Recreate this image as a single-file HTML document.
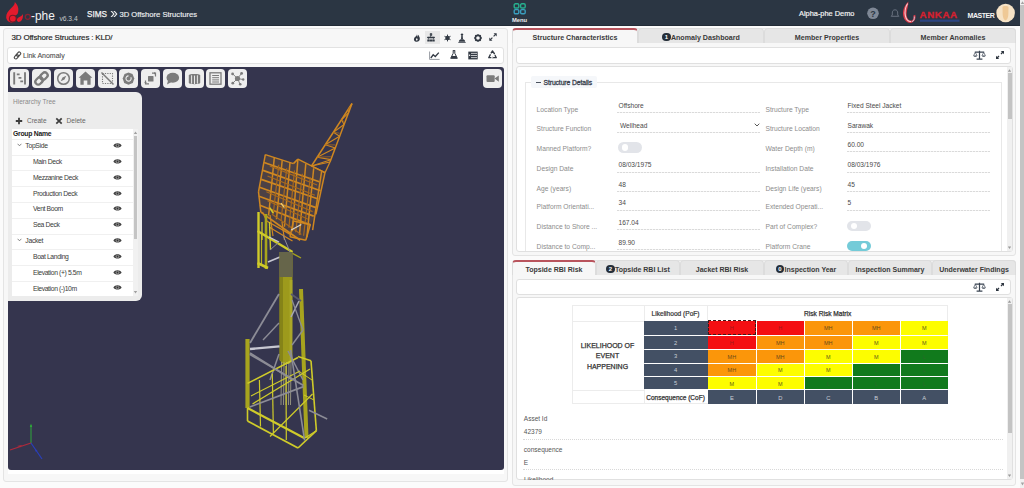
<!DOCTYPE html>
<html><head><meta charset="utf-8">
<style>
*{box-sizing:border-box;margin:0;padding:0}
html,body{width:1024px;height:488px;overflow:hidden;background:#fbfbfb;font-family:"Liberation Sans",sans-serif;color:#333}
.abs{position:absolute}
.t{position:absolute;white-space:nowrap;line-height:1}
.tb{position:absolute;top:69px;width:19px;height:19px;background:#eeeeee;border-radius:4px}
.tab{position:absolute;height:15px;background:#e6e6e6;border:1px solid #dcdcdc;border-bottom:none;border-radius:4px 4px 0 0}
.tab.act{background:#f7f7f7;border-top:2px solid #b9545d}
.tbox{position:absolute;background:#fff;border:1px solid #e0e0e0;border-radius:3px}
</style></head><body>
<div class="abs" style="left:0;top:0;width:1020px;height:25.6px;background:#2b3643;border-bottom:1px solid #232c37"></div>
<svg class="abs" style="left:0;top:0" width="60" height="26" viewBox="0 0 60 26">
 <path d="M14.8 2 C18 5 19.2 9 17.8 13.2 C17.2 14.6 16 15 15.2 15.6 C13.5 14.6 11 15.2 10.2 17.3 C9.7 19.3 10.8 21.4 12.6 22.5 C9.2 22.6 6.5 20.6 6.2 17.5 C6 14 8.3 11 10.8 8.6 C12.8 6.6 15 4.8 14.8 2 Z" fill="#e41b2d"/>
 <circle cx="12.8" cy="18.6" r="3.4" fill="#e41b2d" stroke="#7e1824" stroke-width="1.1"/>
 <path d="M23 13.9 C22.3 16 19.8 16.5 17.8 18 C16.3 19.4 16.6 21.6 18.6 21.9 C21.2 21.9 23.3 19 23 13.9 Z" fill="#e41b2d"/>
 <circle cx="27.8" cy="16.8" r="2.5" fill="none" stroke="#8a2232" stroke-width="1.3"/>
</svg>
<div class="t" style="left:31px;top:10.5px;font-size:11.9px;color:#f2f2f2">-phe</div>
<div class="t" style="left:59.4px;top:16px;font-size:6.7px;color:#c4c8cc">v6.3.4</div>

<div class="t" style="left:87px;top:11px;font-size:8.2px;color:#f2f2f2;-webkit-text-stroke:0.25px #f2f2f2">SIMS</div>

<svg class="abs" style="left:110px;top:10px" width="8" height="8" viewBox="0 0 8 8"><path d="M0.5 1 L3.2 4 L0.5 7 L2 7 L4.7 4 L2 1 Z M3.3 1 L6 4 L3.3 7 L4.8 7 L7.5 4 L4.8 1 Z" fill="#eee"/></svg>
<div class="t" style="left:119.5px;top:11px;font-size:7.6px;color:#eceef0;-webkit-text-stroke:0.15px #eceef0">3D Offshore Structures</div>

<svg class="abs" style="left:513px;top:3px" width="14" height="12" viewBox="0 0 14 12">
 <rect x="1.2" y="0.8" width="4.6" height="4.2" rx="1.2" fill="none" stroke="#27b08e" stroke-width="1.4"/>
 <rect x="7.6" y="0.8" width="4.6" height="4.2" rx="1.2" fill="none" stroke="#27b08e" stroke-width="1.4"/>
 <rect x="1.2" y="6.6" width="4.6" height="4.2" rx="1.2" fill="none" stroke="#3a9ebe" stroke-width="1.4"/>
 <rect x="7.6" y="6.6" width="4.6" height="4.2" rx="1.2" fill="none" stroke="#3a9ebe" stroke-width="1.4"/>
</svg>
<div class="t" style="left:512px;top:18px;font-size:5.8px;color:#f0f0f0;font-weight:bold">Menu</div>
<div class="t" style="left:799px;top:10px;font-size:7.4px;color:#f0f0f0;-webkit-text-stroke:0.2px #f0f0f0">Alpha-phe Demo</div>
<svg class="abs" style="left:866px;top:7px" width="14" height="13" viewBox="0 0 14 13">
 <circle cx="7" cy="6.3" r="5.8" fill="#7f8896"/>
 <text x="7" y="9.6" font-family="Liberation Sans" font-weight="bold" font-size="9" fill="#2b3643" text-anchor="middle">?</text>
</svg>
<svg class="abs" style="left:890px;top:9px" width="10" height="9" viewBox="0 0 10 9"><path d="M5 0.8 C3 0.8 2.3 2.3 2.3 4 L2.3 6 L1.2 7.3 L8.8 7.3 L7.7 6 L7.7 4 C7.7 2.3 7 0.8 5 0.8 Z" fill="none" stroke="#6e7784" stroke-width="0.9"/></svg>
<svg class="abs" style="left:900px;top:0" width="62" height="26" viewBox="0 0 62 26">
 <path d="M8.3 1.5 C4 6 2.3 11 3.3 16 C4.3 21 8 23.7 11.6 22.7 C14.8 21.7 16.3 18.5 15.2 14.8 L13.4 15.4 C14 18 13 20.6 11 20.6 C8 20.6 6.3 17 6.6 13 C6.9 9 8.8 5 8.3 1.5 Z" fill="#de3a48"/>
 <path d="M7.6 3.5 C5.2 7.5 4.6 12 5.4 15.8 C6.2 19.5 8.6 21.6 11.2 21.5" fill="none" stroke="#f4d0d6" stroke-width="1.1"/>
 <path d="M12 21.6 C13.8 21 14.6 19 14.3 16.5" fill="none" stroke="#c9c4d8" stroke-width="1"/>
 <text x="19.6" y="18.4" font-family="Liberation Sans" font-weight="bold" font-size="9.8" fill="#d42030" letter-spacing="0.55" stroke="#d42030" stroke-width="0.35">ANKAA</text>
 <rect x="20" y="19.6" width="39.5" height="2.2" fill="#2c4a94" opacity="0.75"/>
</svg>
<div class="t" style="left:967.5px;top:11.5px;font-size:7px;color:#f4f4f4;font-weight:bold;letter-spacing:-0.45px">MASTER</div>
<svg class="abs" style="left:996px;top:3px" width="20" height="20" viewBox="0 0 20 20">
 <circle cx="9.6" cy="10" r="9.3" fill="#f6e3c6"/>
 <path d="M6.5 4 C7 2.8 12 2.8 12.5 4 L12.3 12 C12 15 11 17 9.5 17.5 C8 17 7 15 6.7 12 Z" fill="#eec28a" opacity="0.8"/>
</svg>
<div class="abs" style="left:1019.5px;top:0;width:4.5px;height:488px;background:#f1f1f1"></div><div class="abs" style="left:1020px;top:5px;width:4px;height:474px;background:#c4c4c4"></div><svg class="abs" style="left:1019.5px;top:0" width="5" height="488" viewBox="0 0 5 488"><path d="M0.8 4 L2.5 1.2 L4.2 4 Z M0.8 482.5 L2.5 485.5 L4.2 482.5 Z" fill="#a3a3a3"/></svg>
<div class="abs" style="left:3px;top:28px;width:505px;height:454px;background:#f7f7f7;border:1px solid #e4e4e4;border-radius:3px"></div>
<div class="abs" style="left:8px;top:469px;width:496px;height:4.5px;background:#fff"></div>
<div class="t" style="left:11.5px;top:34px;font-size:8px;color:#222;letter-spacing:-0.18px;-webkit-text-stroke:0.15px #222">3D Offshore Structures : KLD/</div>

<div class="abs" style="left:7px;top:47px;width:497px;height:17px;background:#fff;border:1px solid #e2e2e2;border-radius:3px"></div>
<div class="t" style="left:23px;top:52px;font-size:7px;color:#505050;-webkit-text-stroke:0.1px #505050">Link Anomaly</div>

<div class="abs" style="left:8px;top:67px;width:496px;height:403px;background:#35354e;border-radius:3px"></div>
<svg id="model" class="abs" style="left:8px;top:67px" width="496" height="403" viewBox="8 67 496 403">
<line x1="352" y1="103.5" x2="311.5" y2="166" stroke="#cf8720" stroke-width="1.5" opacity="1"/>
<line x1="352" y1="103.5" x2="330" y2="162" stroke="#cf8720" stroke-width="1.5" opacity="1"/>
<line x1="349.57" y1="107.25" x2="348.48" y2="112.86" stroke="#cf8720" stroke-width="1.1" opacity="1"/>
<line x1="348.48" y1="112.86" x2="341.47" y2="119.75" stroke="#cf8720" stroke-width="1.1" opacity="1"/>
<line x1="349.57" y1="107.25" x2="348.48" y2="109.86" stroke="#a9691c" stroke-width="0.8" opacity="1"/>
<line x1="341.47" y1="119.75" x2="344.08" y2="124.56" stroke="#cf8720" stroke-width="1.1" opacity="1"/>
<line x1="344.08" y1="124.56" x2="333.37" y2="132.25" stroke="#cf8720" stroke-width="1.1" opacity="1"/>
<line x1="341.47" y1="119.75" x2="344.08" y2="121.56" stroke="#a9691c" stroke-width="0.8" opacity="1"/>
<line x1="333.37" y1="132.25" x2="339.68" y2="136.26" stroke="#cf8720" stroke-width="1.1" opacity="1"/>
<line x1="339.68" y1="136.26" x2="325.27" y2="144.75" stroke="#cf8720" stroke-width="1.1" opacity="1"/>
<line x1="333.37" y1="132.25" x2="339.68" y2="133.26" stroke="#a9691c" stroke-width="0.8" opacity="1"/>
<line x1="325.27" y1="144.75" x2="335.28" y2="147.96" stroke="#cf8720" stroke-width="1.1" opacity="1"/>
<line x1="335.28" y1="147.96" x2="317.17" y2="157.25" stroke="#cf8720" stroke-width="1.1" opacity="1"/>
<line x1="325.27" y1="144.75" x2="335.28" y2="144.96" stroke="#a9691c" stroke-width="0.8" opacity="1"/>
<line x1="317.17" y1="157.25" x2="330.88" y2="159.66" stroke="#cf8720" stroke-width="1.1" opacity="1"/>
<line x1="330.88" y1="159.66" x2="311.5" y2="166.0" stroke="#cf8720" stroke-width="1.1" opacity="1"/>
<line x1="317.17" y1="157.25" x2="330.88" y2="156.66" stroke="#a9691c" stroke-width="0.8" opacity="1"/>
<line x1="311.5" y1="166" x2="330" y2="162" stroke="#cf8720" stroke-width="1.2" opacity="1"/>
<line x1="330" y1="162" x2="325" y2="172.7" stroke="#cf8720" stroke-width="1.3" opacity="1"/>
<line x1="311.5" y1="166" x2="325" y2="172.7" stroke="#cf8720" stroke-width="1.3" opacity="1"/>
<polygon points="265.27027027027026,154.63963963963963 293.4234234234234,163.64864864864865 297.92792792792795,159.14414414414415 324.9549549549549,172.65765765765764 315.94594594594594,214.32432432432432 310.3153153153153,224.45945945945945 305.81081081081084,240.22522522522522 290.0450450450451,236.84684684684686 260.76576576576576,212.07207207207205 258.5135135135135,191.8018018018018" fill="#b87a20" opacity="0.18"/>
<line x1="265.3" y1="154.6" x2="293.4" y2="163.6" stroke="#cf8720" stroke-width="1.5" opacity="1"/>
<line x1="265.3" y1="154.6" x2="258.5" y2="191.8" stroke="#cf8720" stroke-width="1.5" opacity="1"/>
<line x1="258.5" y1="191.8" x2="260.8" y2="212.1" stroke="#cf8720" stroke-width="1.5" opacity="1"/>
<line x1="297.9" y1="159.1" x2="325.0" y2="172.7" stroke="#cf8720" stroke-width="1.5" opacity="1"/>
<line x1="293.4" y1="163.6" x2="297.9" y2="159.1" stroke="#cf8720" stroke-width="1.5" opacity="1"/>
<line x1="325.0" y1="172.7" x2="315.9" y2="214.3" stroke="#cf8720" stroke-width="1.5" opacity="1"/>
<line x1="264.1" y1="162.5" x2="319.3" y2="181.7" stroke="#cf8720" stroke-width="1.7" opacity="1"/>
<line x1="263.0" y1="170.4" x2="320.5" y2="190.7" stroke="#cf8720" stroke-width="1.7" opacity="1"/>
<line x1="261.2" y1="179.4" x2="318.2" y2="199.0" stroke="#cf8720" stroke-width="1.7" opacity="1"/>
<line x1="259.6" y1="187.3" x2="315.9" y2="207.6" stroke="#cf8720" stroke-width="1.7" opacity="1"/>
<line x1="259.0" y1="196.3" x2="313.7" y2="216.1" stroke="#cf8720" stroke-width="1.7" opacity="1"/>
<line x1="259.9" y1="205.3" x2="310.8" y2="225.1" stroke="#cf8720" stroke-width="1.7" opacity="1"/>
<line x1="260.8" y1="212.1" x2="300.2" y2="240.2" stroke="#cf8720" stroke-width="1.7" opacity="1"/>
<line x1="274.3" y1="157.6" x2="268.6" y2="215.5" stroke="#cf8720" stroke-width="1.5" opacity="1"/>
<line x1="282.2" y1="160.3" x2="276.5" y2="219.3" stroke="#cf8720" stroke-width="1.5" opacity="1"/>
<line x1="290.0" y1="162.5" x2="284.4" y2="226.7" stroke="#cf8720" stroke-width="1.5" opacity="1"/>
<line x1="297.9" y1="159.1" x2="292.3" y2="231.2" stroke="#cf8720" stroke-width="1.5" opacity="1"/>
<line x1="305.8" y1="163.6" x2="299.5" y2="234.6" stroke="#cf8720" stroke-width="1.5" opacity="1"/>
<line x1="313.7" y1="168.2" x2="306.9" y2="237.3" stroke="#cf8720" stroke-width="1.5" opacity="1"/>
<line x1="321.6" y1="171.5" x2="312.6" y2="230.1" stroke="#cf8720" stroke-width="1.5" opacity="1"/>
<line x1="269.8" y1="165.9" x2="317.1" y2="185.0" stroke="#a9691c" stroke-width="1.2" opacity="1"/>
<line x1="267.5" y1="176.0" x2="314.8" y2="195.2" stroke="#a9691c" stroke-width="1.2" opacity="1"/>
<line x1="266.4" y1="191.8" x2="312.6" y2="211.6" stroke="#a9691c" stroke-width="1.2" opacity="1"/>
<line x1="267.5" y1="200.8" x2="308.1" y2="219.3" stroke="#a9691c" stroke-width="1.2" opacity="1"/>
<line x1="272.0" y1="214.3" x2="301.3" y2="234.6" stroke="#a9691c" stroke-width="1.2" opacity="1"/>
<line x1="278.8" y1="164.8" x2="273.2" y2="214.3" stroke="#a9691c" stroke-width="1.2" opacity="1"/>
<line x1="286.7" y1="168.2" x2="281.0" y2="221.1" stroke="#a9691c" stroke-width="1.2" opacity="1"/>
<line x1="294.5" y1="170.4" x2="288.9" y2="227.8" stroke="#a9691c" stroke-width="1.2" opacity="1"/>
<line x1="302.4" y1="173.8" x2="295.7" y2="232.3" stroke="#a9691c" stroke-width="1.2" opacity="1"/>
<line x1="310.3" y1="177.2" x2="303.6" y2="235.7" stroke="#a9691c" stroke-width="1.2" opacity="1"/>
<line x1="293.4" y1="221.1" x2="310.3" y2="224.5" stroke="#cf8720" stroke-width="1.5" opacity="1"/>
<line x1="310.3" y1="224.5" x2="305.8" y2="240.2" stroke="#cf8720" stroke-width="1.5" opacity="1"/>
<line x1="305.8" y1="240.2" x2="290.0" y2="236.8" stroke="#cf8720" stroke-width="1.5" opacity="1"/>
<line x1="290.0" y1="236.8" x2="293.4" y2="221.1" stroke="#cf8720" stroke-width="1.5" opacity="1"/>
<line x1="291.2" y1="230.1" x2="301.3" y2="224.5" stroke="#d8d6d0" stroke-width="1.2" opacity="1"/>
<line x1="269.8" y1="207.6" x2="273.2" y2="213.2" stroke="#cfcb2a" stroke-width="1.6" opacity="1"/>
<line x1="281.0" y1="203.1" x2="284.4" y2="207.6" stroke="#e8d080" stroke-width="1.2" opacity="1"/>
<line x1="266.7" y1="221" x2="291.3" y2="234.8" stroke="#cf8720" stroke-width="1.4" opacity="1"/>
<line x1="269" y1="227" x2="292.5" y2="241" stroke="#cf8720" stroke-width="1.3" opacity="1"/>
<line x1="270" y1="215" x2="273" y2="236" stroke="#cf8720" stroke-width="1.2" opacity="1"/>
<line x1="282" y1="222" x2="284.5" y2="240" stroke="#cf8720" stroke-width="1.2" opacity="1"/>
<line x1="262.5" y1="212" x2="266.7" y2="221" stroke="#cf8720" stroke-width="1.2" opacity="1"/>
<line x1="258.5" y1="212" x2="258.5" y2="268" stroke="#cfcb2a" stroke-width="2.4" opacity="1"/>
<line x1="266" y1="214" x2="266" y2="269" stroke="#a9a51c" stroke-width="2.6" opacity="1"/>
<line x1="269.5" y1="222" x2="270.5" y2="250" stroke="#cfcb2a" stroke-width="1.4" opacity="1"/>
<line x1="261.5" y1="232" x2="261.5" y2="264" stroke="#b8b420" stroke-width="1.2" opacity="1"/>
<line x1="257.5" y1="231" x2="292.5" y2="252" stroke="#cfcb2a" stroke-width="2.4" opacity="1"/>
<line x1="257.5" y1="263" x2="268" y2="268" stroke="#cfcb2a" stroke-width="2.6" opacity="1"/>
<line x1="262" y1="222" x2="262" y2="240" stroke="#cfcb2a" stroke-width="1.3" opacity="1"/>
<line x1="268" y1="262" x2="280" y2="257" stroke="#c8c8d2" stroke-width="1.7" opacity="1"/>
<line x1="269" y1="237" x2="279" y2="242" stroke="#c8c8d2" stroke-width="1.3" opacity="1"/>
<line x1="270" y1="250" x2="279" y2="242" stroke="#8c8c96" stroke-width="1.0" opacity="1"/>
<line x1="283" y1="235" x2="290" y2="252" stroke="#8c8c96" stroke-width="1.0" opacity="1"/>
<line x1="290" y1="252" x2="301" y2="258" stroke="#a9a51c" stroke-width="1.4" opacity="1"/>
<polygon points="279.5,252 292.5,252 292.3,360 289,364 283,364 279.5,360" fill="#9d9a1c" opacity="1"/>
<polygon points="279.5,252 292.5,252 292.5,277 279.5,277" fill="#66654a" opacity="1"/>
<polygon points="279.5,277 283,277 283,362 279.5,360" fill="#7f7d18" opacity="0.8"/>
<polygon points="289.5,280 292.5,280 292.3,360 289.5,363" fill="#b3b030" opacity="0.6"/>
<line x1="301" y1="289" x2="306.5" y2="438" stroke="#a7a41e" stroke-width="4.0" opacity="1"/>
<line x1="247.5" y1="339" x2="247.5" y2="408" stroke="#a7a41e" stroke-width="4.2" opacity="1"/>
<line x1="250" y1="343" x2="279" y2="294" stroke="#8c8c96" stroke-width="1.8" opacity="1"/>
<line x1="250" y1="349" x2="279.5" y2="346.4" stroke="#c8c8d2" stroke-width="2.3" opacity="1"/>
<line x1="250" y1="353" x2="293" y2="380" stroke="#8c8c96" stroke-width="1.8" opacity="1"/>
<line x1="288" y1="351" x2="303" y2="380" stroke="#8c8c96" stroke-width="1.5" opacity="1"/>
<line x1="291" y1="294" x2="301" y2="301" stroke="#5a5a6e" stroke-width="1.8" opacity="1"/>
<line x1="291" y1="317" x2="299" y2="301" stroke="#a8a8b4" stroke-width="1.5" opacity="1"/>
<line x1="292" y1="300" x2="303" y2="330" stroke="#8c8c96" stroke-width="1.3" opacity="1"/>
<line x1="303" y1="330" x2="292" y2="345" stroke="#8c8c96" stroke-width="1.4" opacity="1"/>
<line x1="279" y1="354" x2="270" y2="380" stroke="#8c8c96" stroke-width="1.5" opacity="1"/>
<line x1="263" y1="340" x2="279" y2="323" stroke="#8c8c96" stroke-width="1.4" opacity="1"/>
<line x1="281.5" y1="362" x2="281.0" y2="405" stroke="#a9a78a" stroke-width="0.9" opacity="0.9"/>
<line x1="284" y1="362" x2="283.5" y2="405" stroke="#a9a78a" stroke-width="0.9" opacity="0.9"/>
<line x1="286.5" y1="362" x2="286.0" y2="405" stroke="#a9a78a" stroke-width="0.9" opacity="0.9"/>
<line x1="289" y1="362" x2="288.5" y2="405" stroke="#a9a78a" stroke-width="0.9" opacity="0.9"/>
<line x1="291" y1="362" x2="290.5" y2="405" stroke="#a9a78a" stroke-width="0.9" opacity="0.9"/>
<line x1="247.5" y1="408" x2="304.6" y2="438.3" stroke="#cfcb2a" stroke-width="2.1" opacity="1"/>
<line x1="247.5" y1="421" x2="298" y2="448" stroke="#cfcb2a" stroke-width="1.9" opacity="1"/>
<line x1="247.5" y1="408" x2="247.5" y2="421" stroke="#cfcb2a" stroke-width="1.6" opacity="1"/>
<line x1="298" y1="448" x2="316.4" y2="430.7" stroke="#cfcb2a" stroke-width="1.7" opacity="1"/>
<line x1="304.6" y1="438.3" x2="316.4" y2="430.7" stroke="#cfcb2a" stroke-width="1.2" opacity="1"/>
<line x1="311" y1="360.8" x2="316.4" y2="430.7" stroke="#cfcb2a" stroke-width="1.6" opacity="1"/>
<line x1="298" y1="356.5" x2="311" y2="360.8" stroke="#cfcb2a" stroke-width="1.6" opacity="1"/>
<line x1="247.5" y1="383.4" x2="298" y2="357.5" stroke="#cfcb2a" stroke-width="1.6" opacity="1"/>
<line x1="259.4" y1="380" x2="260.5" y2="426.4" stroke="#cfcb2a" stroke-width="1.2" opacity="1"/>
<line x1="272.3" y1="373.7" x2="273.4" y2="433" stroke="#cfcb2a" stroke-width="1.2" opacity="1"/>
<line x1="286" y1="366" x2="286.3" y2="440" stroke="#cfcb2a" stroke-width="1.2" opacity="1"/>
<line x1="251" y1="396" x2="300" y2="371" stroke="#cfcb2a" stroke-width="1.1" opacity="1"/>
<line x1="252.5" y1="404" x2="310" y2="369" stroke="#cfcb2a" stroke-width="1.3" opacity="1"/>
<line x1="270" y1="436.5" x2="312.5" y2="394" stroke="#cfcb2a" stroke-width="1.3" opacity="1"/>
<line x1="304" y1="395" x2="314" y2="400" stroke="#cfcb2a" stroke-width="1.0" opacity="1"/>
<line x1="300" y1="372" x2="312" y2="380" stroke="#cfcb2a" stroke-width="1.0" opacity="1"/>
<line x1="249.7" y1="354.3" x2="303.5" y2="385.5" stroke="#8c8c96" stroke-width="1.7" opacity="1"/>
<line x1="249.7" y1="407" x2="303.5" y2="386.6" stroke="#8c8c96" stroke-width="1.7" opacity="1"/>
<line x1="290.6" y1="350" x2="304.6" y2="440.4" stroke="#8c8c96" stroke-width="1.6" opacity="1"/>
<line x1="309" y1="410.3" x2="327.2" y2="419" stroke="#8c8c96" stroke-width="1.5" opacity="1"/>
</svg>
<svg class="tb" style="left:10px" width="19" height="19" viewBox="0 0 19 19"><path d="M4.2 3.2 V15.5 M15 3.2 V15.5" stroke="#7b7b7b" stroke-width="1.9"/><path d="M6.8 5.4 H9.6 M8.5 8.9 H11.4 M10.3 12.4 H13.1" stroke="#7b7b7b" stroke-width="1.6"/></svg>
<svg class="tb" style="left:32px" width="19" height="19" viewBox="0 0 19 19"><g transform="rotate(-45 9.5 9.5)"><rect x="2" y="6.6" width="8.2" height="5.8" rx="2.9" fill="none" stroke="#7b7b7b" stroke-width="2.3"/><rect x="8.8" y="6.6" width="8.2" height="5.8" rx="2.9" fill="none" stroke="#7b7b7b" stroke-width="2.3"/></g></svg>
<svg class="tb" style="left:54px" width="19" height="19" viewBox="0 0 19 19"><circle cx="9.5" cy="9.5" r="5.8" fill="none" stroke="#7b7b7b" stroke-width="1.5"/><path d="M12.3 6.7 L10.5 10.5 L6.7 12.3 L8.5 8.5 Z" fill="#7b7b7b"/></svg>
<svg class="tb" style="left:75.5px" width="19" height="19" viewBox="0 0 19 19"><path d="M9.5 2.4 L16.4 8.8 L14.6 8.8 L14.6 15.8 L11.3 15.8 L11.3 11.4 L7.7 11.4 L7.7 15.8 L4.4 15.8 L4.4 8.8 L2.6 8.8 Z" fill="#7b7b7b"/></svg>
<svg class="tb" style="left:97.5px" width="19" height="19" viewBox="0 0 19 19"><rect x="4.5" y="4.5" width="10" height="10" fill="none" stroke="#7b7b7b" stroke-width="1.1" stroke-dasharray="1.2 1.2"/><path d="M3.5 3.5 L15.5 15.5" stroke="#7b7b7b" stroke-width="1.5"/></svg>
<svg class="tb" style="left:119.3px" width="19" height="19" viewBox="0 0 19 19"><path d="M9.5 3.5 L13.5 5 L15.3 9.5 L13.8 14 L9.5 15.8 L5.2 14 L3.7 9.5 L5.5 5 Z" fill="#7b7b7b"/><path d="M11.8 8.2 A2.6 2.6 0 1 1 9.5 6.9" fill="none" stroke="#eee" stroke-width="1.1"/></svg>
<svg class="tb" style="left:141.3px" width="19" height="19" viewBox="0 0 19 19"><rect x="7" y="7" width="5.5" height="5.5" rx="0.6" fill="#7b7b7b"/><path d="M11 4.2 H14.5 V7.5 M4.5 11.5 V14.8 H8" fill="none" stroke="#7b7b7b" stroke-width="1.2"/><path d="M13 3 L15 4.2 L13 5.4 Z M3.3 13 L4.5 15 L5.7 13 Z" fill="#7b7b7b"/></svg>
<svg class="tb" style="left:162.5px" width="19" height="19" viewBox="0 0 19 19"><ellipse cx="9.8" cy="8.7" rx="6.3" ry="5" fill="#7b7b7b"/><path d="M5 11.5 L4 15.5 L8.5 13 Z" fill="#7b7b7b"/></svg>
<svg class="tb" style="left:184.5px" width="19" height="19" viewBox="0 0 19 19"><path d="M3.8 6 C3.8 4.5 15.2 4.5 15.2 6 V14 C15.2 15.5 3.8 15.5 3.8 14 Z" fill="#7b7b7b"/><path d="M6.6 6.3 V14.6 M9.5 6.6 V15 M12.4 6.3 V14.6" stroke="#e9e9e9" stroke-width="1"/></svg>
<svg class="tb" style="left:206.3px" width="19" height="19" viewBox="0 0 19 19"><rect x="4" y="3.8" width="11" height="11.4" fill="none" stroke="#7b7b7b" stroke-width="1.3"/><path d="M6.2 6.5 H13 M6.2 8.7 H13 M6.2 10.9 H13 M6.2 13 H13" stroke="#7b7b7b" stroke-width="1"/></svg>
<svg class="tb" style="left:228px" width="19" height="19" viewBox="0 0 19 19"><path d="M9.5 9.5 L4.8 5 M9.5 9.5 L13.5 4.5 M9.5 9.5 L15 10.5 M9.5 9.5 L5 14 M9.5 9.5 L12 15" stroke="#7b7b7b" stroke-width="0.9"/><circle cx="9.5" cy="9.5" r="2.6" fill="#7b7b7b"/><circle cx="4.6" cy="4.9" r="1.4" fill="#7b7b7b"/><circle cx="13.6" cy="4.4" r="1.4" fill="#7b7b7b"/><circle cx="15.2" cy="10.5" r="1.2" fill="#7b7b7b"/><circle cx="4.8" cy="14.2" r="1.4" fill="#7b7b7b"/><circle cx="12.2" cy="15.3" r="1.3" fill="#7b7b7b"/></svg>
<svg class="tb" style="left:483px" width="19" height="19" viewBox="0 0 19 19"><rect x="3.5" y="6.3" width="8.2" height="6.6" rx="1" fill="#7b7b7b"/><path d="M11.5 9.6 L15.8 6.5 V12.7 Z" fill="#7b7b7b"/></svg>
<div class="abs" style="left:425.3px;top:30.6px;width:14.7px;height:13.8px;background:#e8e8e8"></div>
<svg class="abs" style="left:412.5px;top:33px" width="8" height="9" viewBox="0 0 8 9"><path d="M3.5 0.5 C5 2.5 2 3.5 1.2 5.2 C0.3 7.2 1.8 8.8 3.6 8.8 C5.8 8.8 7.2 7.3 6.8 5 C6.5 3.6 5.5 2.8 5.6 1.8 C4.8 2.5 4.8 3.8 5 4.5 C4.6 3.5 4.3 1.8 3.5 0.5 Z" fill="#333a44"/><path d="M3.8 5 C4.8 6 5 7.2 3.8 7.6 C2.8 7.6 2.6 6.5 3.8 5 Z" fill="#f7f7f7"/></svg>
<svg class="abs" style="left:427.3px;top:33px" width="8" height="9" viewBox="0 0 8 9"><path d="M3.2 0.5 H4.8 V2.5 H3.2 Z M0.5 4 H7.5 V5 H0.5 Z M3.5 2.5 V4 M1.5 5 V6.5 M6.5 5 V6.5" fill="#333a44" stroke="#333a44" stroke-width="0.6"/><path d="M0.3 6.5 H2.7 V8.5 H0.3 Z M2.9 6.5 H5.1 V8.5 H2.9 Z M5.3 6.5 H7.7 V8.5 H5.3 Z" fill="#333a44"/></svg>
<svg class="abs" style="left:443.5px;top:33.5px" width="7" height="8" viewBox="0 0 7 8"><circle cx="3.5" cy="4" r="2.2" fill="#333a44"/><path d="M3.5 0.6 V7.4 M0.5 2.3 L6.5 5.7 M6.5 2.3 L0.5 5.7" stroke="#333a44" stroke-width="1"/></svg>
<svg class="abs" style="left:458.3px;top:32.5px" width="8" height="10" viewBox="0 0 8 10"><circle cx="4" cy="1.6" r="1.2" fill="#333a44"/><path d="M3.3 2.5 H4.7 L5 6.3 H3 Z" fill="#333a44"/><path d="M0.8 8.8 C0.8 6.8 2.5 6.3 4 6.3 C5.5 6.3 7.2 6.8 7.2 8.8 Z M0.3 9 H7.7 V9.8 H0.3 Z" fill="#333a44"/></svg>
<svg class="abs" style="left:473.5px;top:33.5px" width="8" height="8" viewBox="0 0 8 8"><circle cx="4" cy="4" r="2.6" fill="none" stroke="#333a44" stroke-width="1.6"/><path d="M4 0.2 V1.5 M4 6.5 V7.8 M0.2 4 H1.5 M6.5 4 H7.8 M1.3 1.3 L2.2 2.2 M5.8 5.8 L6.7 6.7 M6.7 1.3 L5.8 2.2 M1.3 6.7 L2.2 5.8" stroke="#333a44" stroke-width="1.3"/></svg>
<svg class="abs" style="left:488.8px;top:33.3px" width="8" height="8" viewBox="0 0 8 8"><path d="M4.6 0.3 H7.7 V3.4 Z M0.3 4.6 V7.7 H3.4 Z" fill="#333a44"/><path d="M6.8 1.2 L4.6 3.4 M1.2 6.8 L3.4 4.6" stroke="#333a44" stroke-width="1.2"/></svg>
<svg class="abs" style="left:429.3px;top:50.5px" width="11" height="9" viewBox="0 0 11 9"><path d="M0.6 0.5 V8.4 H10.6" fill="none" stroke="#8a8f96" stroke-width="0.9"/><path d="M1.8 7 L4.2 3.8 L6.3 5.5 L9.8 1.6" fill="none" stroke="#333a44" stroke-width="1.3"/></svg>
<svg class="abs" style="left:450.3px;top:50.3px" width="8" height="9" viewBox="0 0 8 9"><path d="M2.8 0.6 H5.2 M3.2 0.8 V3.3 L0.7 8.3 H7.3 L4.8 3.3 V0.8" fill="none" stroke="#333a44" stroke-width="1"/><path d="M1.8 6 H6.2 L7.3 8.3 H0.7 Z" fill="#333a44"/></svg>
<svg class="abs" style="left:467.8px;top:50.5px" width="10" height="9" viewBox="0 0 10 9"><rect x="0.3" y="0.6" width="9.4" height="7.8" fill="#333a44"/><path d="M3 2.4 H9 M3 4.5 H9 M3 6.6 H9" stroke="#fff" stroke-width="0.7"/><rect x="0.9" y="3.6" width="1.3" height="1.3" fill="#fff"/></svg>
<svg class="abs" style="left:487.5px;top:50.2px" width="9" height="9" viewBox="0 0 9 9"><path d="M2.9 3.4 L4.5 0.9 L6.1 3.4 M6.9 5.1 L8.3 7.7 H5.6 M3.4 7.7 H0.7 L2.1 5.1" fill="none" stroke="#333a44" stroke-width="1.3" stroke-linejoin="round"/><path d="M5.2 3.9 L6.8 2.5 L7.2 4.6 Z M4.6 6.6 L6.2 7.7 L4.6 8.8 Z M1.3 4.6 L2.9 4.1 L2.5 6.1 Z" fill="#333a44"/></svg>
<svg class="abs" style="left:12.5px;top:51px" width="9" height="9" viewBox="0 0 9 9"><g transform="rotate(-50 4.5 4.5)"><rect x="0.4" y="3" width="4.8" height="3" rx="1.5" fill="none" stroke="#4a4a4a" stroke-width="1.1"/><rect x="3.8" y="3" width="4.8" height="3" rx="1.5" fill="none" stroke="#4a4a4a" stroke-width="1.1"/></g></svg>
<svg class="abs" style="left:8px;top:400px" width="50" height="70" viewBox="0 0 50 70">
<line x1="23" y1="43" x2="23" y2="25" stroke="#2fa83a" stroke-width="1"/><path d="M21.8 27 L23 23.5 L24.2 27 Z" fill="#2fa83a"/>
<line x1="23" y1="43" x2="2" y2="50" stroke="#b02a3c" stroke-width="1.3"/><path d="M9 46 L14 45 L12.5 47.2 Z" fill="#b02a3c"/>
<line x1="23" y1="43" x2="34" y2="59" stroke="#2a3fb8" stroke-width="1.2"/><path d="M27 49 L29.5 50.5 L27.8 52 Z" fill="#2a3fb8"/>
</svg>
<div class="abs" style="left:8px;top:92px;width:134px;height:209px;background:#ececec;border-radius:0 6px 6px 0"></div>
<div class="t" style="left:13px;top:99px;font-size:6.5px;color:#8a8a8a">Hierarchy Tree</div>

<svg class="abs" style="left:15px;top:117px" width="8" height="8" viewBox="0 0 8 8"><path d="M4 0.8 V7.2 M0.8 4 H7.2" stroke="#3d3d3d" stroke-width="1.8"/></svg>
<div class="t" style="left:27px;top:118px;font-size:6.5px;color:#666">Create</div>

<svg class="abs" style="left:55px;top:117px" width="8" height="8" viewBox="0 0 8 8"><path d="M1.3 1.3 L6.7 6.7 M6.7 1.3 L1.3 6.7" stroke="#3d3d3d" stroke-width="1.7"/></svg>
<div class="t" style="left:66.5px;top:118px;font-size:6.6px;color:#666">Delete</div>

<div class="abs" style="left:12px;top:129px;width:126px;height:167px;background:#fff"></div>
<div class="abs" style="left:133px;top:129px;width:4.5px;height:167px;background:#f1f1f1"></div>
<div class="abs" style="left:133.5px;top:136px;width:3.5px;height:103px;background:#c4c4c4"></div>
<svg class="abs" style="left:133px;top:129px" width="5" height="167" viewBox="0 0 5 167"><path d="M0.8 5 L2.5 2.5 L4.2 5 Z M0.8 162 L2.5 164.5 L4.2 162 Z" fill="#a0a0a0"/></svg>
<div class="t" style="left:13px;top:131px;font-size:6.8px;color:#222;font-weight:bold;letter-spacing:-0.25px">Group Name</div>

<div class="abs" style="left:12px;top:138.8px;width:121px;height:1px;background:#f0f0f0"></div>
<svg class="abs" style="left:16.5px;top:143.3px" width="5" height="4" viewBox="0 0 5 4"><path d="M0.6 0.8 L2.5 2.8 L4.4 0.8" fill="none" stroke="#666" stroke-width="0.8"/></svg>
<div class="t" style="left:25.3px;top:143px;font-size:6.8px;color:#3a3a3a;letter-spacing:-0.3px">TopSide</div>

<svg class="abs" style="left:112.5px;top:142.1px" width="9" height="7" viewBox="0 0 9 7"><path d="M0.4 3.4 C1.8 0.6 7.2 0.6 8.6 3.4 C7.2 6.2 1.8 6.2 0.4 3.4 Z" fill="#404040"/><ellipse cx="4.5" cy="3.5" rx="1.9" ry="1.6" fill="#9a9a9a"/><circle cx="4.5" cy="3.5" r="0.9" fill="#333"/></svg>
<div class="abs" style="left:12px;top:154.6px;width:121px;height:1px;background:#f0f0f0"></div>
<div class="t" style="left:33px;top:159px;font-size:6.8px;color:#3a3a3a;letter-spacing:-0.38px">Main Deck</div>

<svg class="abs" style="left:112.5px;top:157.9px" width="9" height="7" viewBox="0 0 9 7"><path d="M0.4 3.4 C1.8 0.6 7.2 0.6 8.6 3.4 C7.2 6.2 1.8 6.2 0.4 3.4 Z" fill="#404040"/><ellipse cx="4.5" cy="3.5" rx="1.9" ry="1.6" fill="#9a9a9a"/><circle cx="4.5" cy="3.5" r="0.9" fill="#333"/></svg>
<div class="abs" style="left:12px;top:170.4px;width:121px;height:1px;background:#f0f0f0"></div>
<div class="t" style="left:33px;top:175px;font-size:6.8px;color:#3a3a3a;letter-spacing:-0.38px">Mezzanine Deck</div>

<svg class="abs" style="left:112.5px;top:173.7px" width="9" height="7" viewBox="0 0 9 7"><path d="M0.4 3.4 C1.8 0.6 7.2 0.6 8.6 3.4 C7.2 6.2 1.8 6.2 0.4 3.4 Z" fill="#404040"/><ellipse cx="4.5" cy="3.5" rx="1.9" ry="1.6" fill="#9a9a9a"/><circle cx="4.5" cy="3.5" r="0.9" fill="#333"/></svg>
<div class="abs" style="left:12px;top:186.2px;width:121px;height:1px;background:#f0f0f0"></div>
<div class="t" style="left:33px;top:191px;font-size:6.8px;color:#3a3a3a;letter-spacing:-0.38px">Production Deck</div>

<svg class="abs" style="left:112.5px;top:189.5px" width="9" height="7" viewBox="0 0 9 7"><path d="M0.4 3.4 C1.8 0.6 7.2 0.6 8.6 3.4 C7.2 6.2 1.8 6.2 0.4 3.4 Z" fill="#404040"/><ellipse cx="4.5" cy="3.5" rx="1.9" ry="1.6" fill="#9a9a9a"/><circle cx="4.5" cy="3.5" r="0.9" fill="#333"/></svg>
<div class="abs" style="left:12px;top:202.0px;width:121px;height:1px;background:#f0f0f0"></div>
<div class="t" style="left:33px;top:206px;font-size:6.8px;color:#3a3a3a;letter-spacing:-0.38px">Vent Boom</div>

<svg class="abs" style="left:112.5px;top:205.3px" width="9" height="7" viewBox="0 0 9 7"><path d="M0.4 3.4 C1.8 0.6 7.2 0.6 8.6 3.4 C7.2 6.2 1.8 6.2 0.4 3.4 Z" fill="#404040"/><ellipse cx="4.5" cy="3.5" rx="1.9" ry="1.6" fill="#9a9a9a"/><circle cx="4.5" cy="3.5" r="0.9" fill="#333"/></svg>
<div class="abs" style="left:12px;top:217.8px;width:121px;height:1px;background:#f0f0f0"></div>
<div class="t" style="left:33px;top:222px;font-size:6.8px;color:#3a3a3a;letter-spacing:-0.38px">Sea Deck</div>

<svg class="abs" style="left:112.5px;top:221.1px" width="9" height="7" viewBox="0 0 9 7"><path d="M0.4 3.4 C1.8 0.6 7.2 0.6 8.6 3.4 C7.2 6.2 1.8 6.2 0.4 3.4 Z" fill="#404040"/><ellipse cx="4.5" cy="3.5" rx="1.9" ry="1.6" fill="#9a9a9a"/><circle cx="4.5" cy="3.5" r="0.9" fill="#333"/></svg>
<div class="abs" style="left:12px;top:233.6px;width:121px;height:1px;background:#f0f0f0"></div>
<svg class="abs" style="left:16.5px;top:238.1px" width="5" height="4" viewBox="0 0 5 4"><path d="M0.6 0.8 L2.5 2.8 L4.4 0.8" fill="none" stroke="#666" stroke-width="0.8"/></svg>
<div class="t" style="left:25.3px;top:238px;font-size:6.8px;color:#3a3a3a;letter-spacing:-0.3px">Jacket</div>

<svg class="abs" style="left:112.5px;top:236.9px" width="9" height="7" viewBox="0 0 9 7"><path d="M0.4 3.4 C1.8 0.6 7.2 0.6 8.6 3.4 C7.2 6.2 1.8 6.2 0.4 3.4 Z" fill="#404040"/><ellipse cx="4.5" cy="3.5" rx="1.9" ry="1.6" fill="#9a9a9a"/><circle cx="4.5" cy="3.5" r="0.9" fill="#333"/></svg>
<div class="abs" style="left:12px;top:249.4px;width:121px;height:1px;background:#f0f0f0"></div>
<div class="t" style="left:33px;top:254px;font-size:6.8px;color:#3a3a3a;letter-spacing:-0.38px">Boat Landing</div>

<svg class="abs" style="left:112.5px;top:252.7px" width="9" height="7" viewBox="0 0 9 7"><path d="M0.4 3.4 C1.8 0.6 7.2 0.6 8.6 3.4 C7.2 6.2 1.8 6.2 0.4 3.4 Z" fill="#404040"/><ellipse cx="4.5" cy="3.5" rx="1.9" ry="1.6" fill="#9a9a9a"/><circle cx="4.5" cy="3.5" r="0.9" fill="#333"/></svg>
<div class="abs" style="left:12px;top:265.2px;width:121px;height:1px;background:#f0f0f0"></div>
<div class="t" style="left:33px;top:270px;font-size:6.8px;color:#3a3a3a;letter-spacing:-0.38px">Elevation (+) 5.5m</div>

<svg class="abs" style="left:112.5px;top:268.5px" width="9" height="7" viewBox="0 0 9 7"><path d="M0.4 3.4 C1.8 0.6 7.2 0.6 8.6 3.4 C7.2 6.2 1.8 6.2 0.4 3.4 Z" fill="#404040"/><ellipse cx="4.5" cy="3.5" rx="1.9" ry="1.6" fill="#9a9a9a"/><circle cx="4.5" cy="3.5" r="0.9" fill="#333"/></svg>
<div class="abs" style="left:12px;top:281.0px;width:121px;height:1px;background:#f0f0f0"></div>
<div class="t" style="left:33px;top:286px;font-size:6.8px;color:#3a3a3a;letter-spacing:-0.38px">Elevation (-)10m</div>

<svg class="abs" style="left:112.5px;top:284.3px" width="9" height="7" viewBox="0 0 9 7"><path d="M0.4 3.4 C1.8 0.6 7.2 0.6 8.6 3.4 C7.2 6.2 1.8 6.2 0.4 3.4 Z" fill="#404040"/><ellipse cx="4.5" cy="3.5" rx="1.9" ry="1.6" fill="#9a9a9a"/><circle cx="4.5" cy="3.5" r="0.9" fill="#333"/></svg>
<div class="abs" style="left:512px;top:28px;width:504px;height:227.5px;background:#f7f7f7;border:1px solid #e4e4e4;border-radius:3px"></div>
<div class="abs" style="left:512px;top:260px;width:504px;height:225.5px;background:#f7f7f7;border:1px solid #e4e4e4;border-radius:3px"></div>
<div class="tab act" style="left:512px;top:28px;width:126px"></div>
<div class="t" style="left:512px;top:35px;width:126px;text-align:center;font-size:7.1px;font-weight:bold;color:#3a3a3a">Structure Characteristics</div>

<div class="tab" style="left:638px;top:28px;width:126px"></div>
<div class="t" style="left:638px;top:35px;width:126px;text-align:center;font-size:7.1px;font-weight:bold;color:#3a3a3a"><span style="position:relative;display:inline-block;width:8.8px;height:1px"><span style="position:absolute;left:0;top:-6.2px;width:8.4px;height:8.4px;border-radius:50%;background:#252e39;color:#fff;font-size:6px;line-height:8.6px;text-align:center">1</span></span>Anomaly Dashboard</div>

<div class="tab" style="left:764px;top:28px;width:126px"></div>
<div class="t" style="left:764px;top:35px;width:126px;text-align:center;font-size:7.1px;font-weight:bold;color:#3a3a3a">Member Properties</div>

<div class="tab" style="left:890px;top:28px;width:126px"></div>
<div class="t" style="left:890px;top:35px;width:126px;text-align:center;font-size:7.1px;font-weight:bold;color:#3a3a3a">Member Anomalies</div>

<div class="tab act" style="left:512px;top:260px;width:84px"></div>
<div class="t" style="left:512px;top:266px;width:84px;text-align:center;font-size:7.0px;font-weight:bold;color:#3a3a3a">Topside RBI Risk</div>

<div class="tab" style="left:596px;top:260px;width:84px"></div>
<div class="t" style="left:596px;top:266px;width:84px;text-align:center;font-size:7.0px;font-weight:bold;color:#3a3a3a"><span style="position:relative;display:inline-block;width:8.8px;height:1px"><span style="position:absolute;left:0;top:-6.2px;width:8.4px;height:8.4px;border-radius:50%;background:#252e39;color:#fff;font-size:6px;line-height:8.6px;text-align:center">2</span></span>Topside RBI List</div>

<div class="tab" style="left:680px;top:260px;width:84px"></div>
<div class="t" style="left:680px;top:266px;width:84px;text-align:center;font-size:7.0px;font-weight:bold;color:#3a3a3a">Jacket RBI Risk</div>

<div class="tab" style="left:764px;top:260px;width:84px"></div>
<div class="t" style="left:764px;top:266px;width:84px;text-align:center;font-size:7.0px;font-weight:bold;color:#3a3a3a"><span style="position:relative;display:inline-block;width:8.8px;height:1px"><span style="position:absolute;left:0;top:-6.2px;width:8.4px;height:8.4px;border-radius:50%;background:#252e39;color:#fff;font-size:6px;line-height:8.6px;text-align:center">0</span></span>Inspection Year</div>

<div class="tab" style="left:848px;top:260px;width:84px"></div>
<div class="t" style="left:848px;top:266px;width:84px;text-align:center;font-size:7.0px;font-weight:bold;color:#3a3a3a">Inspection Summary</div>

<div class="tab" style="left:932px;top:260px;width:84px"></div>
<div class="t" style="left:932px;top:266px;width:84px;text-align:center;font-size:7.0px;font-weight:bold;color:#3a3a3a">Underwater Findings</div>

<div class="tbox" style="left:516px;top:47.3px;width:495px;height:16.5px"></div>
<div class="tbox" style="left:516px;top:66px;width:497px;height:186px;overflow:hidden"></div>
<div class="tbox" style="left:516px;top:278.5px;width:495px;height:16.8px"></div>
<div class="tbox" style="left:516px;top:297px;width:497px;height:183px"></div>
<svg class="abs" style="left:973px;top:50px" width="13" height="10" viewBox="0 0 13 10"><path d="M6.5 0.8 V8.6 M1.8 2.2 H11.2 M3.6 9.1 H9.4" stroke="#3a4452" stroke-width="1.2"/><path d="M2.3 2.4 L0.6 5.6 M2.3 2.4 L4 5.6 M10.7 2.4 L9 5.6 M10.7 2.4 L12.4 5.6" stroke="#3a4452" stroke-width="0.7"/><path d="M0.3 5.5 H4.3 C4.1 7.3 0.5 7.3 0.3 5.5 Z M8.7 5.5 H12.7 C12.5 7.3 8.9 7.3 8.7 5.5 Z" fill="#3a4452"/></svg>
<svg class="abs" style="left:995px;top:50px" width="10" height="10" viewBox="0 0 10 10"><path d="M5.8 1 H9 V4.2 Z M1 5.8 V9 H4.2 Z" fill="#2e3640"/><path d="M8.2 1.8 L6 4 M1.8 8.2 L4 6" stroke="#2e3640" stroke-width="1.3"/></svg>
<svg class="abs" style="left:973px;top:282px" width="13" height="10" viewBox="0 0 13 10"><path d="M6.5 0.8 V8.6 M1.8 2.2 H11.2 M3.6 9.1 H9.4" stroke="#3a4452" stroke-width="1.2"/><path d="M2.3 2.4 L0.6 5.6 M2.3 2.4 L4 5.6 M10.7 2.4 L9 5.6 M10.7 2.4 L12.4 5.6" stroke="#3a4452" stroke-width="0.7"/><path d="M0.3 5.5 H4.3 C4.1 7.3 0.5 7.3 0.3 5.5 Z M8.7 5.5 H12.7 C12.5 7.3 8.9 7.3 8.7 5.5 Z" fill="#3a4452"/></svg>
<svg class="abs" style="left:995px;top:282px" width="10" height="10" viewBox="0 0 10 10"><path d="M5.8 1 H9 V4.2 Z M1 5.8 V9 H4.2 Z" fill="#2e3640"/><path d="M8.2 1.8 L6 4 M1.8 8.2 L4 6" stroke="#2e3640" stroke-width="1.3"/></svg>
<div class="abs" style="left:524.5px;top:82px;width:477px;height:169px;border:1px solid #e8e8e8;border-bottom:none"></div>
<div class="abs" style="left:531px;top:76px;width:66px;height:12px;background:#f5f7fa;border-radius:2px"></div>
<div class="abs" style="left:536.3px;top:82px;width:5px;height:0.8px;background:#4a525e"></div>
<div class="t" style="left:543.5px;top:80px;font-size:6.8px;color:#39414d;letter-spacing:-0.1px;-webkit-text-stroke:0.3px #39414d">Structure Details</div>
<div class="t" style="left:536.6px;top:107px;font-size:6.7px;color:#8c8c8c">Location Type</div>
<div class="t" style="left:618.5px;top:103px;font-size:6.6px;color:#4a4a4a">Offshore</div>
<div class="abs" style="left:617px;top:112.0px;width:143px;height:1px;background:repeating-linear-gradient(90deg,#dadada 0 2px,#f4f4f4 2px 3px)"></div>
<div class="t" style="left:536.6px;top:126px;font-size:6.7px;color:#8c8c8c">Structure Function</div>
<div class="t" style="left:620.0px;top:123px;font-size:6.6px;color:#4a4a4a">Wellhead</div>
<div class="abs" style="left:617px;top:131.9px;width:143px;height:1px;background:repeating-linear-gradient(90deg,#dadada 0 2px,#f4f4f4 2px 3px)"></div>
<svg class="abs" style="left:753.5px;top:122.8px" width="6" height="4" viewBox="0 0 6 4"><path d="M0.7 0.7 L3 3 L5.3 0.7" fill="none" stroke="#444" stroke-width="0.9"/></svg>
<div class="t" style="left:536.6px;top:146px;font-size:6.7px;color:#8c8c8c">Manned Platform?</div>
<div class="abs" style="left:618.0px;top:142.4px;width:23.5px;height:10.5px;border-radius:5.5px;background:#e2e4e9"></div><div class="abs" style="left:621.6px;top:144.4px;width:6.4px;height:6.4px;border-radius:50%;background:#fff"></div>
<div class="t" style="left:536.6px;top:166px;font-size:6.7px;color:#8c8c8c">Design Date</div>
<div class="t" style="left:618.5px;top:162px;font-size:6.6px;color:#4a4a4a">08/03/1975</div>
<div class="abs" style="left:617px;top:171.8px;width:143px;height:1px;background:repeating-linear-gradient(90deg,#dadada 0 2px,#f4f4f4 2px 3px)"></div>
<div class="t" style="left:536.6px;top:186px;font-size:6.7px;color:#8c8c8c">Age (years)</div>
<div class="t" style="left:618.5px;top:182px;font-size:6.6px;color:#4a4a4a">48</div>
<div class="abs" style="left:617px;top:191.1px;width:143px;height:1px;background:repeating-linear-gradient(90deg,#dadada 0 2px,#f4f4f4 2px 3px)"></div>
<div class="t" style="left:536.6px;top:204px;font-size:6.7px;color:#8c8c8c">Platform Orientati...</div>
<div class="t" style="left:618.5px;top:200px;font-size:6.6px;color:#4a4a4a">34</div>
<div class="abs" style="left:617px;top:209.7px;width:143px;height:1px;background:repeating-linear-gradient(90deg,#dadada 0 2px,#f4f4f4 2px 3px)"></div>
<div class="t" style="left:536.6px;top:224px;font-size:6.7px;color:#8c8c8c">Distance to Shore ...</div>
<div class="t" style="left:618.5px;top:220px;font-size:6.6px;color:#4a4a4a">167.04</div>
<div class="abs" style="left:617px;top:229.4px;width:143px;height:1px;background:repeating-linear-gradient(90deg,#dadada 0 2px,#f4f4f4 2px 3px)"></div>
<div class="t" style="left:536.6px;top:244px;font-size:6.7px;color:#8c8c8c">Distance to Comp...</div>
<div class="t" style="left:618.5px;top:240px;font-size:6.6px;color:#4a4a4a">89.90</div>
<div class="abs" style="left:617px;top:249.1px;width:143px;height:1px;background:repeating-linear-gradient(90deg,#dadada 0 2px,#f4f4f4 2px 3px)"></div>
<div class="t" style="left:765.5px;top:107px;font-size:6.7px;color:#8c8c8c">Structure Type</div>
<div class="t" style="left:847.5px;top:103px;font-size:6.6px;color:#4a4a4a">Fixed Steel Jacket</div>
<div class="abs" style="left:846.5px;top:112.0px;width:143px;height:1px;background:repeating-linear-gradient(90deg,#dadada 0 2px,#f4f4f4 2px 3px)"></div>
<div class="t" style="left:765.5px;top:126px;font-size:6.7px;color:#8c8c8c">Structure Location</div>
<div class="t" style="left:847.5px;top:123px;font-size:6.6px;color:#4a4a4a">Sarawak</div>
<div class="abs" style="left:846.5px;top:131.9px;width:143px;height:1px;background:repeating-linear-gradient(90deg,#dadada 0 2px,#f4f4f4 2px 3px)"></div>
<div class="t" style="left:765.5px;top:146px;font-size:6.7px;color:#8c8c8c">Water Depth (m)</div>
<div class="t" style="left:847.5px;top:142px;font-size:6.6px;color:#4a4a4a">60.00</div>
<div class="abs" style="left:846.5px;top:151.0px;width:143px;height:1px;background:repeating-linear-gradient(90deg,#dadada 0 2px,#f4f4f4 2px 3px)"></div>
<div class="t" style="left:765.5px;top:166px;font-size:6.7px;color:#8c8c8c">Installation Date</div>
<div class="t" style="left:847.5px;top:162px;font-size:6.6px;color:#4a4a4a">08/03/1976</div>
<div class="abs" style="left:846.5px;top:171.8px;width:143px;height:1px;background:repeating-linear-gradient(90deg,#dadada 0 2px,#f4f4f4 2px 3px)"></div>
<div class="t" style="left:765.5px;top:186px;font-size:6.7px;color:#8c8c8c">Design Life (years)</div>
<div class="t" style="left:847.5px;top:182px;font-size:6.6px;color:#4a4a4a">45</div>
<div class="abs" style="left:846.5px;top:191.1px;width:143px;height:1px;background:repeating-linear-gradient(90deg,#dadada 0 2px,#f4f4f4 2px 3px)"></div>
<div class="t" style="left:765.5px;top:204px;font-size:6.7px;color:#8c8c8c">Extended Operati...</div>
<div class="t" style="left:847.5px;top:200px;font-size:6.6px;color:#4a4a4a">5</div>
<div class="abs" style="left:846.5px;top:209.7px;width:143px;height:1px;background:repeating-linear-gradient(90deg,#dadada 0 2px,#f4f4f4 2px 3px)"></div>
<div class="t" style="left:765.5px;top:224px;font-size:6.7px;color:#8c8c8c">Part of Complex?</div>
<div class="abs" style="left:847.0px;top:220.8px;width:23.5px;height:10.5px;border-radius:5.5px;background:#e2e4e9"></div><div class="abs" style="left:850.6px;top:222.8px;width:6.4px;height:6.4px;border-radius:50%;background:#fff"></div>
<div class="t" style="left:765.5px;top:244px;font-size:6.7px;color:#8c8c8c">Platform Crane</div>
<div class="abs" style="left:847.0px;top:240.5px;width:23.5px;height:10.5px;border-radius:5.5px;background:#74cbd8"></div><div class="abs" style="left:861.0px;top:242.5px;width:6.4px;height:6.4px;border-radius:50%;background:#fff"></div>
<div class="abs" style="left:1007px;top:67px;width:5px;height:184px;background:#f0f0f0"></div>
<div class="abs" style="left:1007.5px;top:73px;width:4px;height:46px;background:#c3c3c3"></div>
<svg class="abs" style="left:1007px;top:67px" width="5" height="184" viewBox="0 0 5 184"><path d="M0.8 4.8 L2.5 2.2 L4.2 4.8 Z M0.8 179.5 L2.5 182 L4.2 179.5 Z" fill="#9a9a9a"/></svg>

<div class="abs" style="left:571.5px;top:305.3px;width:376.3px;height:98.9px;border:1px solid #ececec;background:#fff"></div>
<div class="abs" style="left:643.5px;top:305.3px;width:1px;height:98.9px;background:#ececec"></div>
<div class="abs" style="left:571.5px;top:320.5px;width:72.0px;height:1px;background:#ececec"></div>
<div class="abs" style="left:571.5px;top:389.6px;width:72.0px;height:1px;background:#ececec"></div>
<div class="abs" style="left:643.5px;top:320.5px;width:64.1px;height:1px;background:#ececec"></div>
<div class="abs" style="left:707.3px;top:305.3px;width:1px;height:15.5px;background:#ececec"></div>
<div class="abs" style="left:643.8px;top:320.5px;width:63.8px;height:14.6px;background:#435064"></div>
<div class="t" style="left:643.5px;top:326px;width:64.1px;text-align:center;font-size:5.8px;color:#c9ced6">1</div>
<div class="abs" style="left:643.8px;top:336.1px;width:63.8px;height:12.9px;background:#435064"></div>
<div class="t" style="left:643.5px;top:341px;width:64.1px;text-align:center;font-size:5.8px;color:#c9ced6">2</div>
<div class="abs" style="left:643.8px;top:350.0px;width:63.8px;height:12.6px;background:#435064"></div>
<div class="t" style="left:643.5px;top:354px;width:64.1px;text-align:center;font-size:5.8px;color:#c9ced6">3</div>
<div class="abs" style="left:643.8px;top:363.6px;width:63.8px;height:12.4px;background:#435064"></div>
<div class="t" style="left:643.5px;top:368px;width:64.1px;text-align:center;font-size:5.8px;color:#c9ced6">4</div>
<div class="abs" style="left:643.8px;top:377.0px;width:63.8px;height:12.4px;background:#435064"></div>
<div class="t" style="left:643.5px;top:381px;width:64.1px;text-align:center;font-size:5.8px;color:#c9ced6">5</div>
<div class="abs" style="left:707.8px;top:320.5px;width:48.1px;height:14.6px;background:#f40f12"></div>
<div class="t" style="left:707.8px;top:326px;width:48.1px;text-align:center;font-size:5.5px;color:#9a1a1a">H</div>
<div class="abs" style="left:756.7px;top:320.5px;width:47.2px;height:14.6px;background:#f40f12"></div>
<div class="t" style="left:756.7px;top:326px;width:47.2px;text-align:center;font-size:5.5px;color:#9a1a1a">H</div>
<div class="abs" style="left:804.7px;top:320.5px;width:47.2px;height:14.6px;background:#fb960a"></div>
<div class="t" style="left:804.7px;top:326px;width:47.2px;text-align:center;font-size:5.5px;color:#6a4a1a">MH</div>
<div class="abs" style="left:852.7px;top:320.5px;width:47.1px;height:14.6px;background:#fb960a"></div>
<div class="t" style="left:852.7px;top:326px;width:47.1px;text-align:center;font-size:5.5px;color:#6a4a1a">MH</div>
<div class="abs" style="left:900.6px;top:320.5px;width:47.2px;height:14.6px;background:#fdfd00"></div>
<div class="t" style="left:900.6px;top:326px;width:47.2px;text-align:center;font-size:5.5px;color:#5a5a1a">M</div>
<div class="abs" style="left:707.8px;top:336.1px;width:48.1px;height:12.9px;background:#f40f12"></div>
<div class="t" style="left:707.8px;top:341px;width:48.1px;text-align:center;font-size:5.5px;color:#9a1a1a">H</div>
<div class="abs" style="left:756.7px;top:336.1px;width:47.2px;height:12.9px;background:#fb960a"></div>
<div class="t" style="left:756.7px;top:341px;width:47.2px;text-align:center;font-size:5.5px;color:#6a4a1a">MH</div>
<div class="abs" style="left:804.7px;top:336.1px;width:47.2px;height:12.9px;background:#fb960a"></div>
<div class="t" style="left:804.7px;top:341px;width:47.2px;text-align:center;font-size:5.5px;color:#6a4a1a">MH</div>
<div class="abs" style="left:852.7px;top:336.1px;width:47.1px;height:12.9px;background:#fdfd00"></div>
<div class="t" style="left:852.7px;top:341px;width:47.1px;text-align:center;font-size:5.5px;color:#5a5a1a">M</div>
<div class="abs" style="left:900.6px;top:336.1px;width:47.2px;height:12.9px;background:#fdfd00"></div>
<div class="t" style="left:900.6px;top:341px;width:47.2px;text-align:center;font-size:5.5px;color:#5a5a1a">M</div>
<div class="abs" style="left:707.8px;top:350.0px;width:48.1px;height:12.6px;background:#fb960a"></div>
<div class="t" style="left:707.8px;top:355px;width:48.1px;text-align:center;font-size:5.5px;color:#6a4a1a">MH</div>
<div class="abs" style="left:756.7px;top:350.0px;width:47.2px;height:12.6px;background:#fb960a"></div>
<div class="t" style="left:756.7px;top:355px;width:47.2px;text-align:center;font-size:5.5px;color:#6a4a1a">MH</div>
<div class="abs" style="left:804.7px;top:350.0px;width:47.2px;height:12.6px;background:#fdfd00"></div>
<div class="t" style="left:804.7px;top:355px;width:47.2px;text-align:center;font-size:5.5px;color:#5a5a1a">M</div>
<div class="abs" style="left:852.7px;top:350.0px;width:47.1px;height:12.6px;background:#fdfd00"></div>
<div class="t" style="left:852.7px;top:355px;width:47.1px;text-align:center;font-size:5.5px;color:#5a5a1a">M</div>
<div class="abs" style="left:900.6px;top:350.0px;width:47.2px;height:12.6px;background:#117a1c"></div>
<div class="t" style="left:900.6px;top:355px;width:47.2px;text-align:center;font-size:5.5px;color:#2a6a2a">L</div>
<div class="abs" style="left:707.8px;top:363.6px;width:48.1px;height:12.4px;background:#fb960a"></div>
<div class="t" style="left:707.8px;top:368px;width:48.1px;text-align:center;font-size:5.5px;color:#6a4a1a">MH</div>
<div class="abs" style="left:756.7px;top:363.6px;width:47.2px;height:12.4px;background:#fdfd00"></div>
<div class="t" style="left:756.7px;top:368px;width:47.2px;text-align:center;font-size:5.5px;color:#5a5a1a">M</div>
<div class="abs" style="left:804.7px;top:363.6px;width:47.2px;height:12.4px;background:#fdfd00"></div>
<div class="t" style="left:804.7px;top:368px;width:47.2px;text-align:center;font-size:5.5px;color:#5a5a1a">M</div>
<div class="abs" style="left:852.7px;top:363.6px;width:47.1px;height:12.4px;background:#117a1c"></div>
<div class="t" style="left:852.7px;top:368px;width:47.1px;text-align:center;font-size:5.5px;color:#2a6a2a">L</div>
<div class="abs" style="left:900.6px;top:363.6px;width:47.2px;height:12.4px;background:#117a1c"></div>
<div class="t" style="left:900.6px;top:368px;width:47.2px;text-align:center;font-size:5.5px;color:#2a6a2a">L</div>
<div class="abs" style="left:707.8px;top:377.0px;width:48.1px;height:12.4px;background:#fdfd00"></div>
<div class="t" style="left:707.8px;top:382px;width:48.1px;text-align:center;font-size:5.5px;color:#5a5a1a">M</div>
<div class="abs" style="left:756.7px;top:377.0px;width:47.2px;height:12.4px;background:#fdfd00"></div>
<div class="t" style="left:756.7px;top:382px;width:47.2px;text-align:center;font-size:5.5px;color:#5a5a1a">M</div>
<div class="abs" style="left:804.7px;top:377.0px;width:47.2px;height:12.4px;background:#117a1c"></div>
<div class="t" style="left:804.7px;top:382px;width:47.2px;text-align:center;font-size:5.5px;color:#2a6a2a">L</div>
<div class="abs" style="left:852.7px;top:377.0px;width:47.1px;height:12.4px;background:#117a1c"></div>
<div class="t" style="left:852.7px;top:382px;width:47.1px;text-align:center;font-size:5.5px;color:#2a6a2a">L</div>
<div class="abs" style="left:900.6px;top:377.0px;width:47.2px;height:12.4px;background:#117a1c"></div>
<div class="t" style="left:900.6px;top:382px;width:47.2px;text-align:center;font-size:5.5px;color:#2a6a2a">L</div>
<div class="abs" style="left:707.6px;top:320.3px;width:48.6px;height:15px;border:1.1px dashed #3a1a1a"></div>
<div class="abs" style="left:707.8px;top:390.4px;width:48.1px;height:13.8px;background:#435064"></div>
<div class="t" style="left:707.8px;top:396px;width:48.1px;text-align:center;font-size:5.8px;color:#c9ced6">E</div>
<div class="abs" style="left:756.7px;top:390.4px;width:47.2px;height:13.8px;background:#435064"></div>
<div class="t" style="left:756.7px;top:396px;width:47.2px;text-align:center;font-size:5.8px;color:#c9ced6">D</div>
<div class="abs" style="left:804.7px;top:390.4px;width:47.2px;height:13.8px;background:#435064"></div>
<div class="t" style="left:804.7px;top:396px;width:47.2px;text-align:center;font-size:5.8px;color:#c9ced6">C</div>
<div class="abs" style="left:852.7px;top:390.4px;width:47.1px;height:13.8px;background:#435064"></div>
<div class="t" style="left:852.7px;top:396px;width:47.1px;text-align:center;font-size:5.8px;color:#c9ced6">B</div>
<div class="abs" style="left:900.6px;top:390.4px;width:47.2px;height:13.8px;background:#435064"></div>
<div class="t" style="left:900.6px;top:396px;width:47.2px;text-align:center;font-size:5.8px;color:#c9ced6">A</div>
<div class="t" style="left:643.5px;top:311px;width:64.1px;text-align:center;font-size:6.6px;color:#333;-webkit-text-stroke:0.2px #333">Likelihood (PoF)</div>
<div class="t" style="left:707.6px;top:311px;width:240.2px;text-align:center;font-size:6.6px;color:#333;-webkit-text-stroke:0.25px #333">Risk Risk Matrix</div>
<div class="t" style="left:643.5px;top:395px;width:64.1px;text-align:center;font-size:6.5px;color:#333;-webkit-text-stroke:0.25px #333">Consequence (CoF)</div>
<div class="t" style="left:571.5px;top:342px;width:72.0px;text-align:center;font-size:7px;color:#333;-webkit-text-stroke:0.25px #333">LIKELIHOOD OF</div>
<div class="t" style="left:571.5px;top:352px;width:72.0px;text-align:center;font-size:7px;color:#333;-webkit-text-stroke:0.25px #333">EVENT</div>
<div class="t" style="left:571.5px;top:363px;width:72.0px;text-align:center;font-size:7px;color:#333;-webkit-text-stroke:0.25px #333">HAPPENING</div>
<div class="t" style="left:523.8px;top:416px;font-size:6.5px;color:#555">Asset Id</div>

<div class="t" style="left:523.8px;top:429px;font-size:6.5px;color:#555">42379</div>

<div class="abs" style="left:523px;top:439px;width:480px;height:0;border-top:1px dotted #d8d8d8"></div>
<div class="t" style="left:523.8px;top:447px;font-size:6.5px;color:#555">consequence</div>

<div class="t" style="left:523.8px;top:460px;font-size:6.5px;color:#555">E</div>

<div class="abs" style="left:523px;top:469px;width:480px;height:0;border-top:1px dotted #d8d8d8"></div>
<div class="abs" style="left:517px;top:474px;width:486px;height:5.5px;overflow:hidden"><div class="t" style="left:7px;top:3px;font-size:6.5px;color:#555">Likelihood</div></div>
<div class="abs" style="left:1007px;top:298px;width:5px;height:181px;background:#f0f0f0"></div>
<div class="abs" style="left:1007.5px;top:304px;width:4px;height:128.5px;background:#c3c3c3"></div>
<svg class="abs" style="left:1007px;top:298px" width="5" height="181" viewBox="0 0 5 181"><path d="M0.8 4.8 L2.5 2.2 L4.2 4.8 Z M0.8 176.5 L2.5 179 L4.2 176.5 Z" fill="#9a9a9a"/></svg>
</body></html>
